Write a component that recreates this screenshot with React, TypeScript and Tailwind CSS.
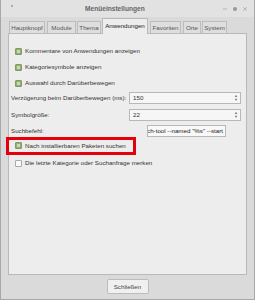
import { Minus, X } from 'lucide-react';

const tabs = [
  { t: 'Hauptknopf', c: 'ml-[8px] w-[36px]' },
  { t: 'Module', c: 'ml-[2px] w-[29px]' },
  { t: 'Thema', c: 'ml-[1px] w-[24px]' },
  { t: 'Anwendungen', c: 'ml-[1px] w-[46px]' },
  { t: 'Favoriten', c: 'ml-[2px] w-[31px]' },
  { t: 'Orte', c: 'ml-[2px] w-[18px]' },
  { t: 'System', c: 'ml-[1px] w-[25px]' },
];

function Check({ on }: { on: boolean }) {
  if (!on) {
    return <div className="w-[7px] h-[7px] shrink-0 border border-[#a9a9a9] bg-[#fafafa] rounded-[1px]" />;
  }
  return (
    <div className="w-[7px] h-[7px] shrink-0 bg-[#8fae73] border border-[#7f9c66] rounded-[1px] flex items-center justify-center">
      <div className="w-[3px] h-[3px] bg-[#c9d9b8]" />
    </div>
  );
}

function CheckRow({ on, label }: { on: boolean; label: string }) {
  return (
    <div className="flex items-center gap-[3px] h-[16px] whitespace-nowrap">
      <Check on={on} />
      <span>{label}</span>
    </div>
  );
}

function Spin({ value }: { value: string }) {
  return (
    <div className="w-[112px] h-[12px] border border-[#b8b8b8] bg-[#f6f6f6] flex items-center justify-between pl-[3px] pr-[2px]">
      <span>{value}</span>
      <div className="flex flex-col leading-none text-[4px] text-[#777]">
        <span>▲</span>
        <span>▼</span>
      </div>
    </div>
  );
}

export default function App() {
  return (
    <div
      className="w-[255px] h-[300px] bg-[#dadada] border-x border-b border-[#a8a8a8] flex flex-col text-[6.2px] text-[#333] overflow-hidden"
      style={{ fontFamily: '"Liberation Sans", Arial, sans-serif' }}
    >
      {/* title bar */}
      <div className="h-[17px] bg-[#e2e2e2] flex items-center relative shrink-0">
        <span className="absolute left-[10px] top-[5px] w-[2px] h-[2px] bg-[#999] rounded-full" />
        <span className="ml-[84px] font-bold text-[#666] text-[6.6px]">Menüeinstellungen</span>
        <div className="ml-auto mr-[6px] flex items-center gap-[5px] text-[#888]">
          <Minus className="w-[6px] h-[6px]" strokeWidth={2} />
          <span className="w-[4px] h-[4px] rounded-full bg-[#999]" />
          <X className="w-[6px] h-[6px]" strokeWidth={2} />
        </div>
      </div>

      {/* tabs */}
      <div className="flex items-end h-[16px] shrink-0 relative z-10 whitespace-nowrap">
        {tabs.map(({ t, c }) =>
          t === 'Anwendungen' ? (
            <div key={t} className={`${c} h-[16px] bg-[#ededed] border border-b-0 border-[#b9b9b9] flex items-center justify-center -mb-px pb-[1px] text-[#222]`}>
              {t}
            </div>
          ) : (
            <div key={t} className={`${c} h-[12px] bg-[#dedede] border border-b-0 border-[#bdbdbd] flex items-center justify-center text-[#555]`}>
              {t}
            </div>
          )
        )}
      </div>

      {/* panel */}
      <div className="mx-[7px] h-[242px] bg-[#ededed] border border-[#b9b9b9] shrink-0 pt-[9px]">
        <div className="pl-[6px]">
          <CheckRow on label="Kommentare von Anwendungen anzeigen" />
          <CheckRow on label="Kategoriesymbole anzeigen" />
          <CheckRow on label="Auswahl durch Darüberbewegen" />
        </div>
        <div className="pl-[2px] pr-[5px] mt-[1px] flex flex-col whitespace-nowrap">
          <div className="flex items-center justify-between">
            <span>Verzögerung beim Darüberbewegen (ms):</span>
            <Spin value="150" />
          </div>
          <div className="flex items-center justify-between mt-[5px]">
            <span>Symbolgröße:</span>
            <Spin value="22" />
          </div>
          <div className="flex items-center mt-[4px]">
            <span className="w-[136px]">Suchbefehl:</span>
            <div className="w-[79px] h-[12px] border border-[#b8b8b8] bg-[#f8f8f8] flex items-center justify-end pr-[2px] overflow-hidden text-[#222]">
              <span className="shrink-0">ch-tool --named "%s" --start</span>
            </div>
          </div>
        </div>
        <div className="-ml-[3px] w-[130px] h-[18px] border-[3px] border-[#e5000c] pl-[6px] flex items-center whitespace-nowrap">
          <div className="flex items-center gap-[3px]">
            <Check on />
            <span>Nach installierbaren Paketen suchen</span>
          </div>
        </div>
        <div className="pl-[6px]">
          <CheckRow on={false} label="Die letzte Kategorie oder Suchanfrage merken" />
        </div>
      </div>

      {/* footer */}
      <div className="flex justify-center pt-[4px]">
        <button className="w-[42px] h-[15px] bg-[#f0f0f0] border border-[#bcbcbc] rounded-[2px] text-[6.2px] text-[#444] flex items-center justify-center">
          Schließen
        </button>
      </div>
    </div>
  );
}
